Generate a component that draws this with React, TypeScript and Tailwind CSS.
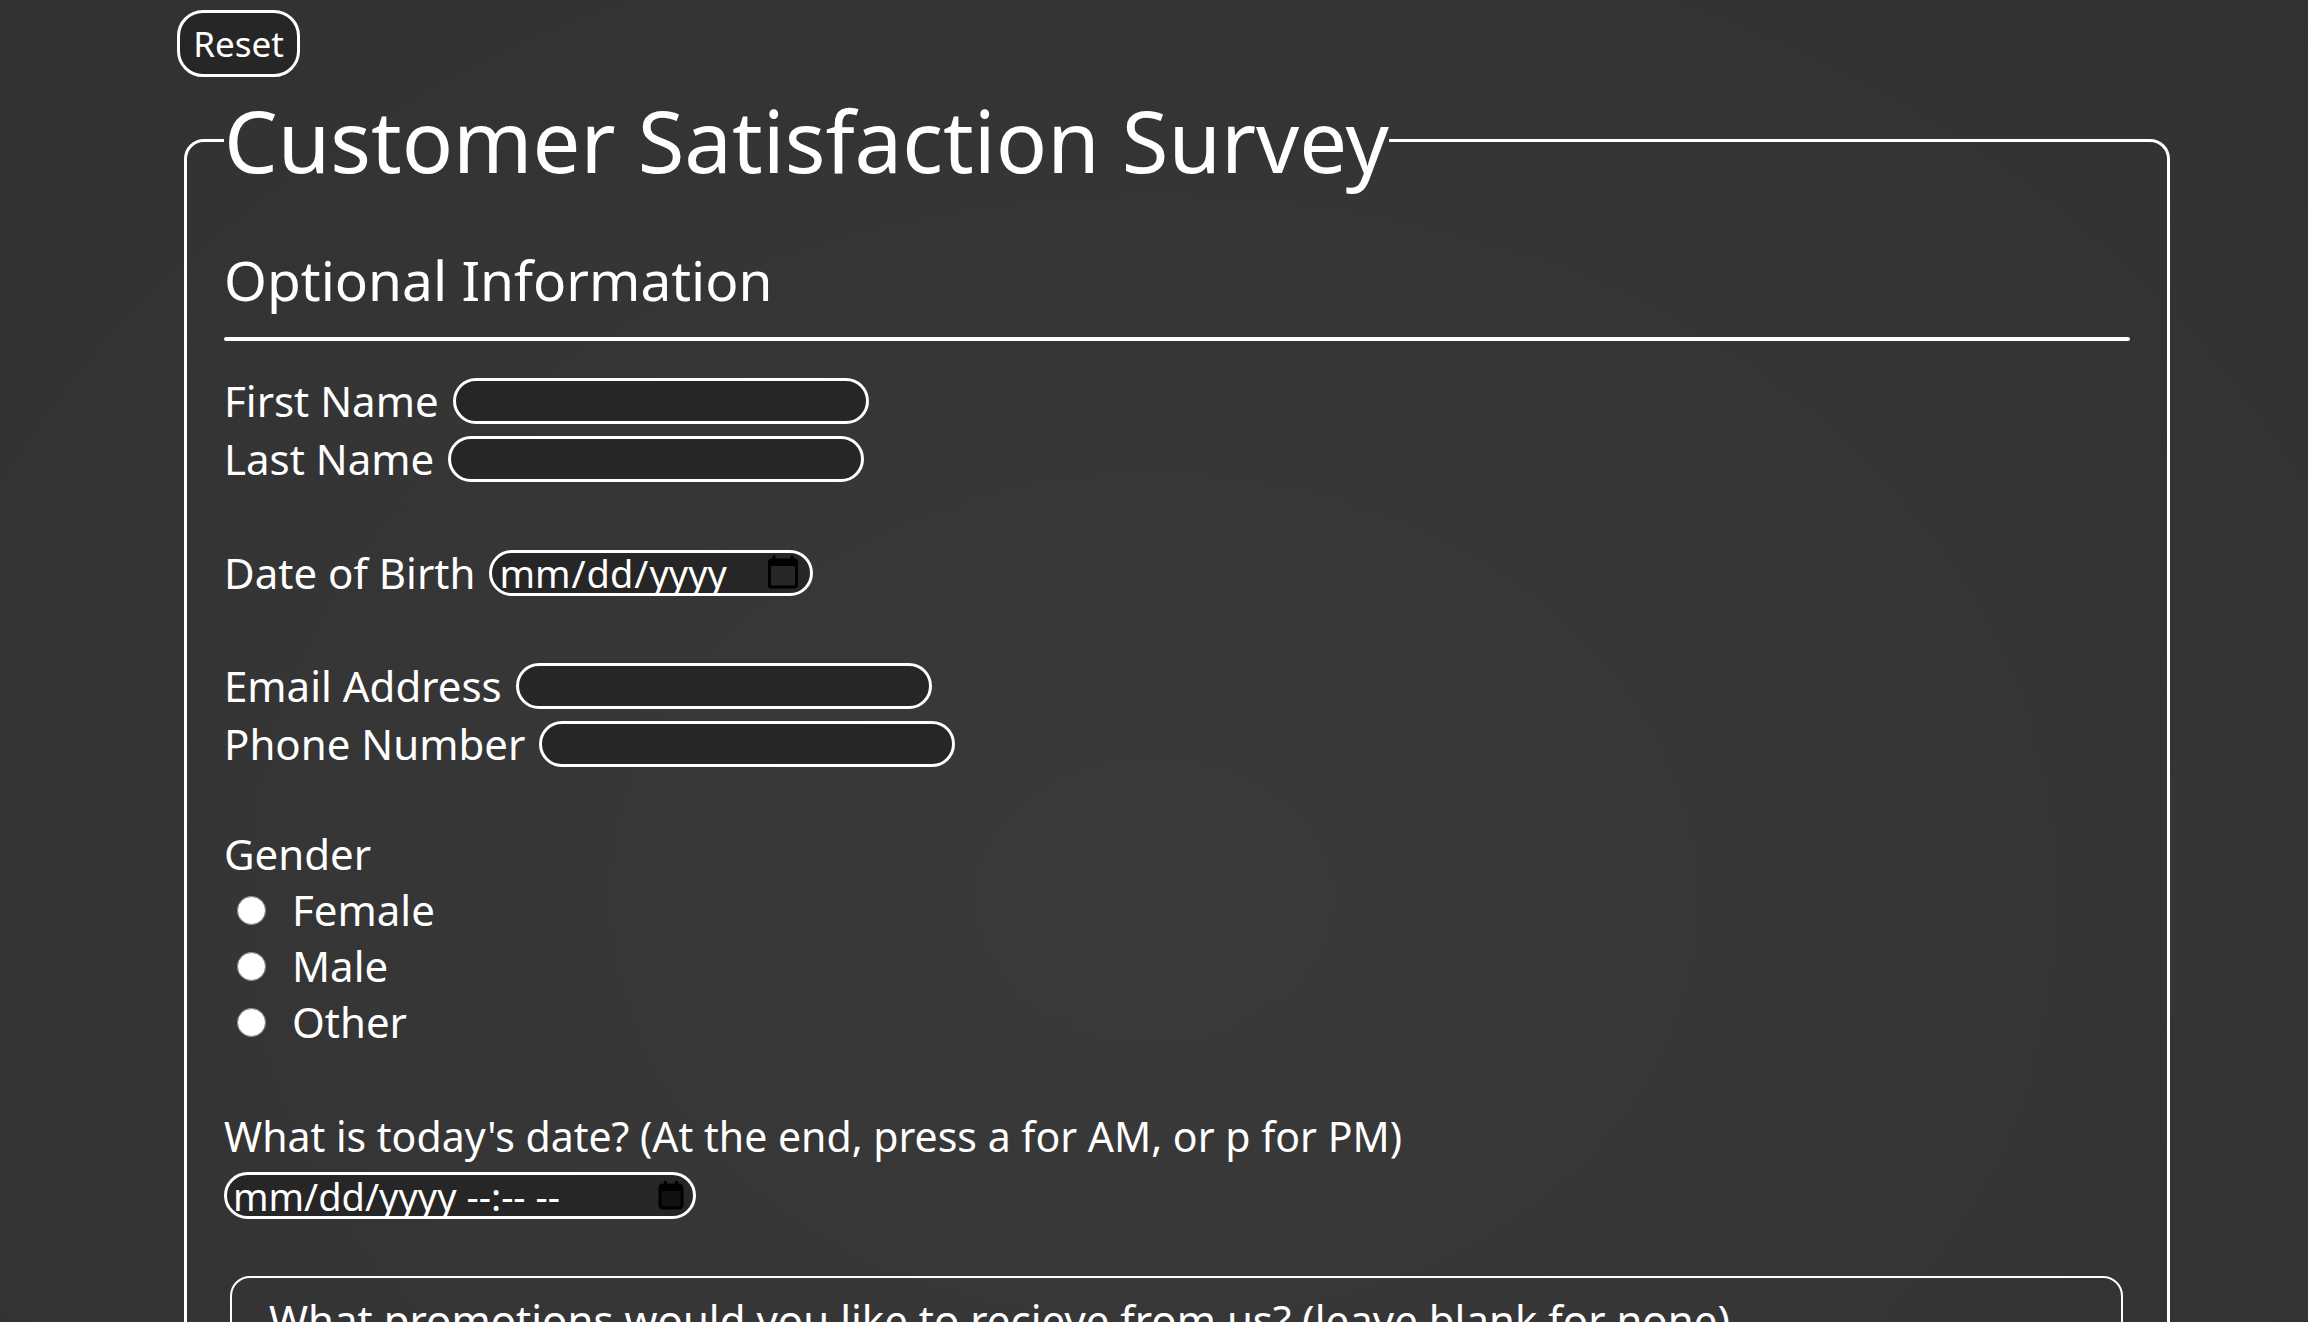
import React from "react";

const Field = ({
  label,
  type = "text",
  width,
}: {
  label: string;
  type?: string;
  width: string;
}) => {
  return (
    <div className="flex items-center gap-[14px] h-[46px]">
      <label className="text-[42px] leading-none whitespace-nowrap">{label}</label>
      <input
        type={type}
        className={`${width} h-[46px] rounded-full border-[3px] border-white bg-[#262626] px-[6px] text-[38px] text-white outline-none [color-scheme:light]`}
      />
    </div>
  );
};

const Radio = ({ label }: { label: string }) => {
  return (
    <label className="flex items-center h-[56px] pl-[13px] gap-[26px] text-[42px] leading-none">
      <input type="radio" name="gender" className="w-[29px] h-[29px] m-0" />
      <span>{label}</span>
    </label>
  );
};

const CalendarIcon = () => (
  <svg width="26" height="30" viewBox="0 0 26 30" fill="none">
    <rect x="2" y="5" width="22" height="23" rx="3" stroke="#000" strokeWidth="3" fill="#111" />
    <rect x="2" y="5" width="22" height="6" fill="#000" />
    <rect x="6" y="1" width="3" height="6" fill="#000" />
    <rect x="17" y="1" width="3" height="6" fill="#000" />
  </svg>
);

export default function App() {
  return (
    <div className="min-h-screen bg-[radial-gradient(ellipse_at_center,#3a3a3a_0%,#313131_100%)] font-['Noto_Sans',sans-serif] text-white pb-[200px]">
      <div className="pl-[177px] pt-[10px]">
        <button className="h-[67px] w-[123px] rounded-[26px] border-[3px] border-white bg-[#262626] text-[35px] leading-none text-white">
          Reset
        </button>
      </div>

      <form className="ml-[184px] mr-[138px] mt-[21px]">
        <fieldset className="border-[3px] border-white rounded-[20px] px-[37px] pb-[60px]">
          <legend className="text-[85px] leading-none">Customer Satisfaction Survey</legend>

          <h2 className="mt-[69px] text-[55px] leading-none">Optional Information</h2>
          <div className="mt-[30px] h-[4px] rounded-full bg-white" />

          <div className="mt-[37px] flex flex-col gap-[12px]">
            <Field label="First Name" width="w-[416px]" />
            <Field label="Last Name" width="w-[416px]" />
          </div>

          <div className="mt-[68px]">
            <Field label="Date of Birth" type="date" width="w-[324px]" />
          </div>

          <div className="mt-[67px] flex flex-col gap-[12px]">
            <Field label="Email Address" type="email" width="w-[416px]" />
            <Field label="Phone Number" type="tel" width="w-[416px]" />
          </div>

          <div className="mt-[59px] h-[56px] flex items-center text-[42px] leading-none">Gender</div>
          <Radio label="Female" />
          <Radio label="Male" />
          <Radio label="Other" />

          <div className="mt-[58px] h-[56px] flex items-center text-[41px] leading-none">
            What is today's date? (At the end, press a for AM, or p for PM)
          </div>
          <div className="relative mt-[8px] w-[472px] h-[47px]">
            <input
              type="text"
              placeholder="mm/dd/yyyy --:-- --"
              className="w-full h-full rounded-full border-[3px] border-white bg-[#262626] pl-[6px] pr-[50px] text-[38px] text-white placeholder:text-white outline-none"
            />
            <span className="absolute right-[12px] top-[8px]">
              <CalendarIcon />
            </span>
          </div>

          <fieldset className="mt-[57px] ml-[6px] mr-[7px] border-2 border-white rounded-[20px] px-[37px] pt-[16px] pb-[30px]">
            <p className="text-[42px] leading-tight">
              What promotions would you like to recieve from us? (leave blank for none)
            </p>
            <div className="mt-[20px] flex flex-col gap-[10px] text-[42px]">
              <label className="flex items-center gap-[20px]">
                <input type="checkbox" className="w-[29px] h-[29px]" />
                Email newsletters
              </label>
              <label className="flex items-center gap-[20px]">
                <input type="checkbox" className="w-[29px] h-[29px]" />
                Text messages
              </label>
            </div>
          </fieldset>
        </fieldset>
      </form>
    </div>
  );
}
